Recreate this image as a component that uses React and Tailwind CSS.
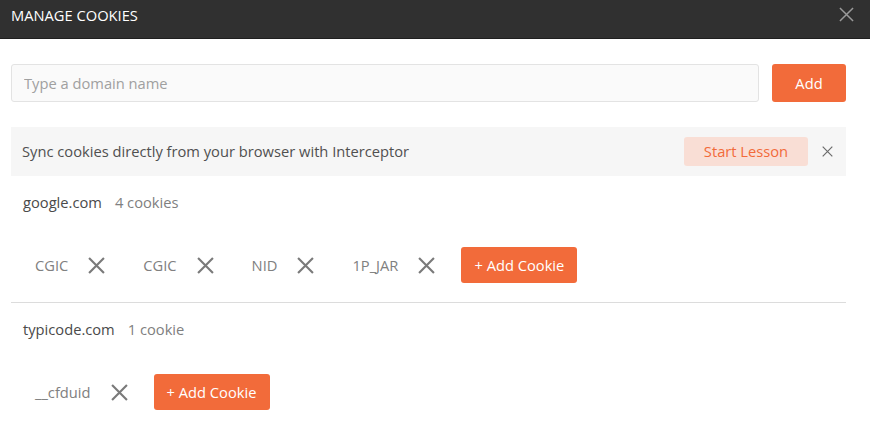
import { useState } from "react";

const font = { fontFamily: '"Open Sans", "Liberation Sans", sans-serif' };

function Cross({ size = 17, color = "#777", width = 2 }) {
  return (
    <svg width={size} height={size} viewBox="0 0 16 16" fill="none">
      <path d="M1 1 L15 15 M15 1 L1 15" stroke={color} strokeWidth={width} strokeLinecap="butt" />
    </svg>
  );
}

const domains = [
  { name: "google.com", count: "4 cookies", cookies: ["CGIC", "CGIC", "NID", "1P_JAR"] },
  { name: "typicode.com", count: "1 cookie", cookies: ["__cfduid"] },
];

function DomainBlock({ domain, last }) {
  return (
    <div className={last ? "" : "border-b border-[#dcdcdc]"}>
      <div className="flex items-center h-[20px] pl-[12px] text-[14.7px]">
        <span className="text-[#4a4a4a]">{domain.name}</span>
        <span className="ml-[13px] text-[#808080]">{domain.count}</span>
      </div>
      <div className="flex items-center gap-[14px] pl-[12px] mt-[35px] pb-[19px]">
        {domain.cookies.map((c, i) => (
          <div key={i} className="flex items-center gap-[20px] px-[12px] h-[36px]">
            <span className="text-[14.7px] text-[#808080]">{c}</span>
            <Cross size={17} color="#7a7a7a" width={2} />
          </div>
        ))}
        <button className="h-[36px] w-[116px] rounded-[3px] bg-[#f26b3a] text-white text-[14.7px]">
          + Add Cookie
        </button>
      </div>
    </div>
  );
}

export default function App() {
  const [domain, setDomain] = useState("");

  return (
    <div className="w-[870px] h-[423px] bg-white overflow-hidden" style={font}>
      <div className="h-[39px] bg-[#303030] border-b border-[#1f1f1f] flex items-start justify-between pl-[11px] pr-[16px]">
        <span className="text-white text-[14.7px] leading-[18px] mt-[6px]">MANAGE COOKIES</span>
        <div className="mt-[7px]">
          <Cross size={15} color="#9a9a9a" width={1.6} />
        </div>
      </div>

      <div className="pl-[11px] pr-[24px]">
        <div className="flex items-center gap-[13px] mt-[25px]">
          <input
            value={domain}
            onChange={(e) => setDomain(e.target.value)}
            placeholder="Type a domain name"
            className="flex-1 h-[38px] rounded-[3px] border border-[#e3e3e3] bg-[#fafafa] px-[12px] text-[14.7px] text-[#505050] placeholder:text-[#a0a0a0] outline-none"
          />
          <button className="h-[38px] w-[74px] rounded-[3px] bg-[#f26b3a] text-white text-[14.7px]">
            Add
          </button>
        </div>

        <div className="mt-[25px] h-[49px] bg-[#f6f6f6] flex items-center pl-[11px] pr-[13px]">
          <span className="flex-1 text-[14.7px] text-[#505050]">
            Sync cookies directly from your browser with Interceptor
          </span>
          <button className="h-[29px] w-[124px] rounded-[3px] bg-[#f9ded5] text-[#f26b3a] text-[14.7px] font-medium">
            Start Lesson
          </button>
          <div className="ml-[14px]">
            <Cross size={11} color="#6a6a6a" width={1.7} />
          </div>
        </div>

        <div className="mt-[16px]">
          <DomainBlock domain={domains[0]} />
          <div className="mt-[16px]">
            <DomainBlock domain={domains[1]} last />
          </div>
        </div>
      </div>
    </div>
  );
}
